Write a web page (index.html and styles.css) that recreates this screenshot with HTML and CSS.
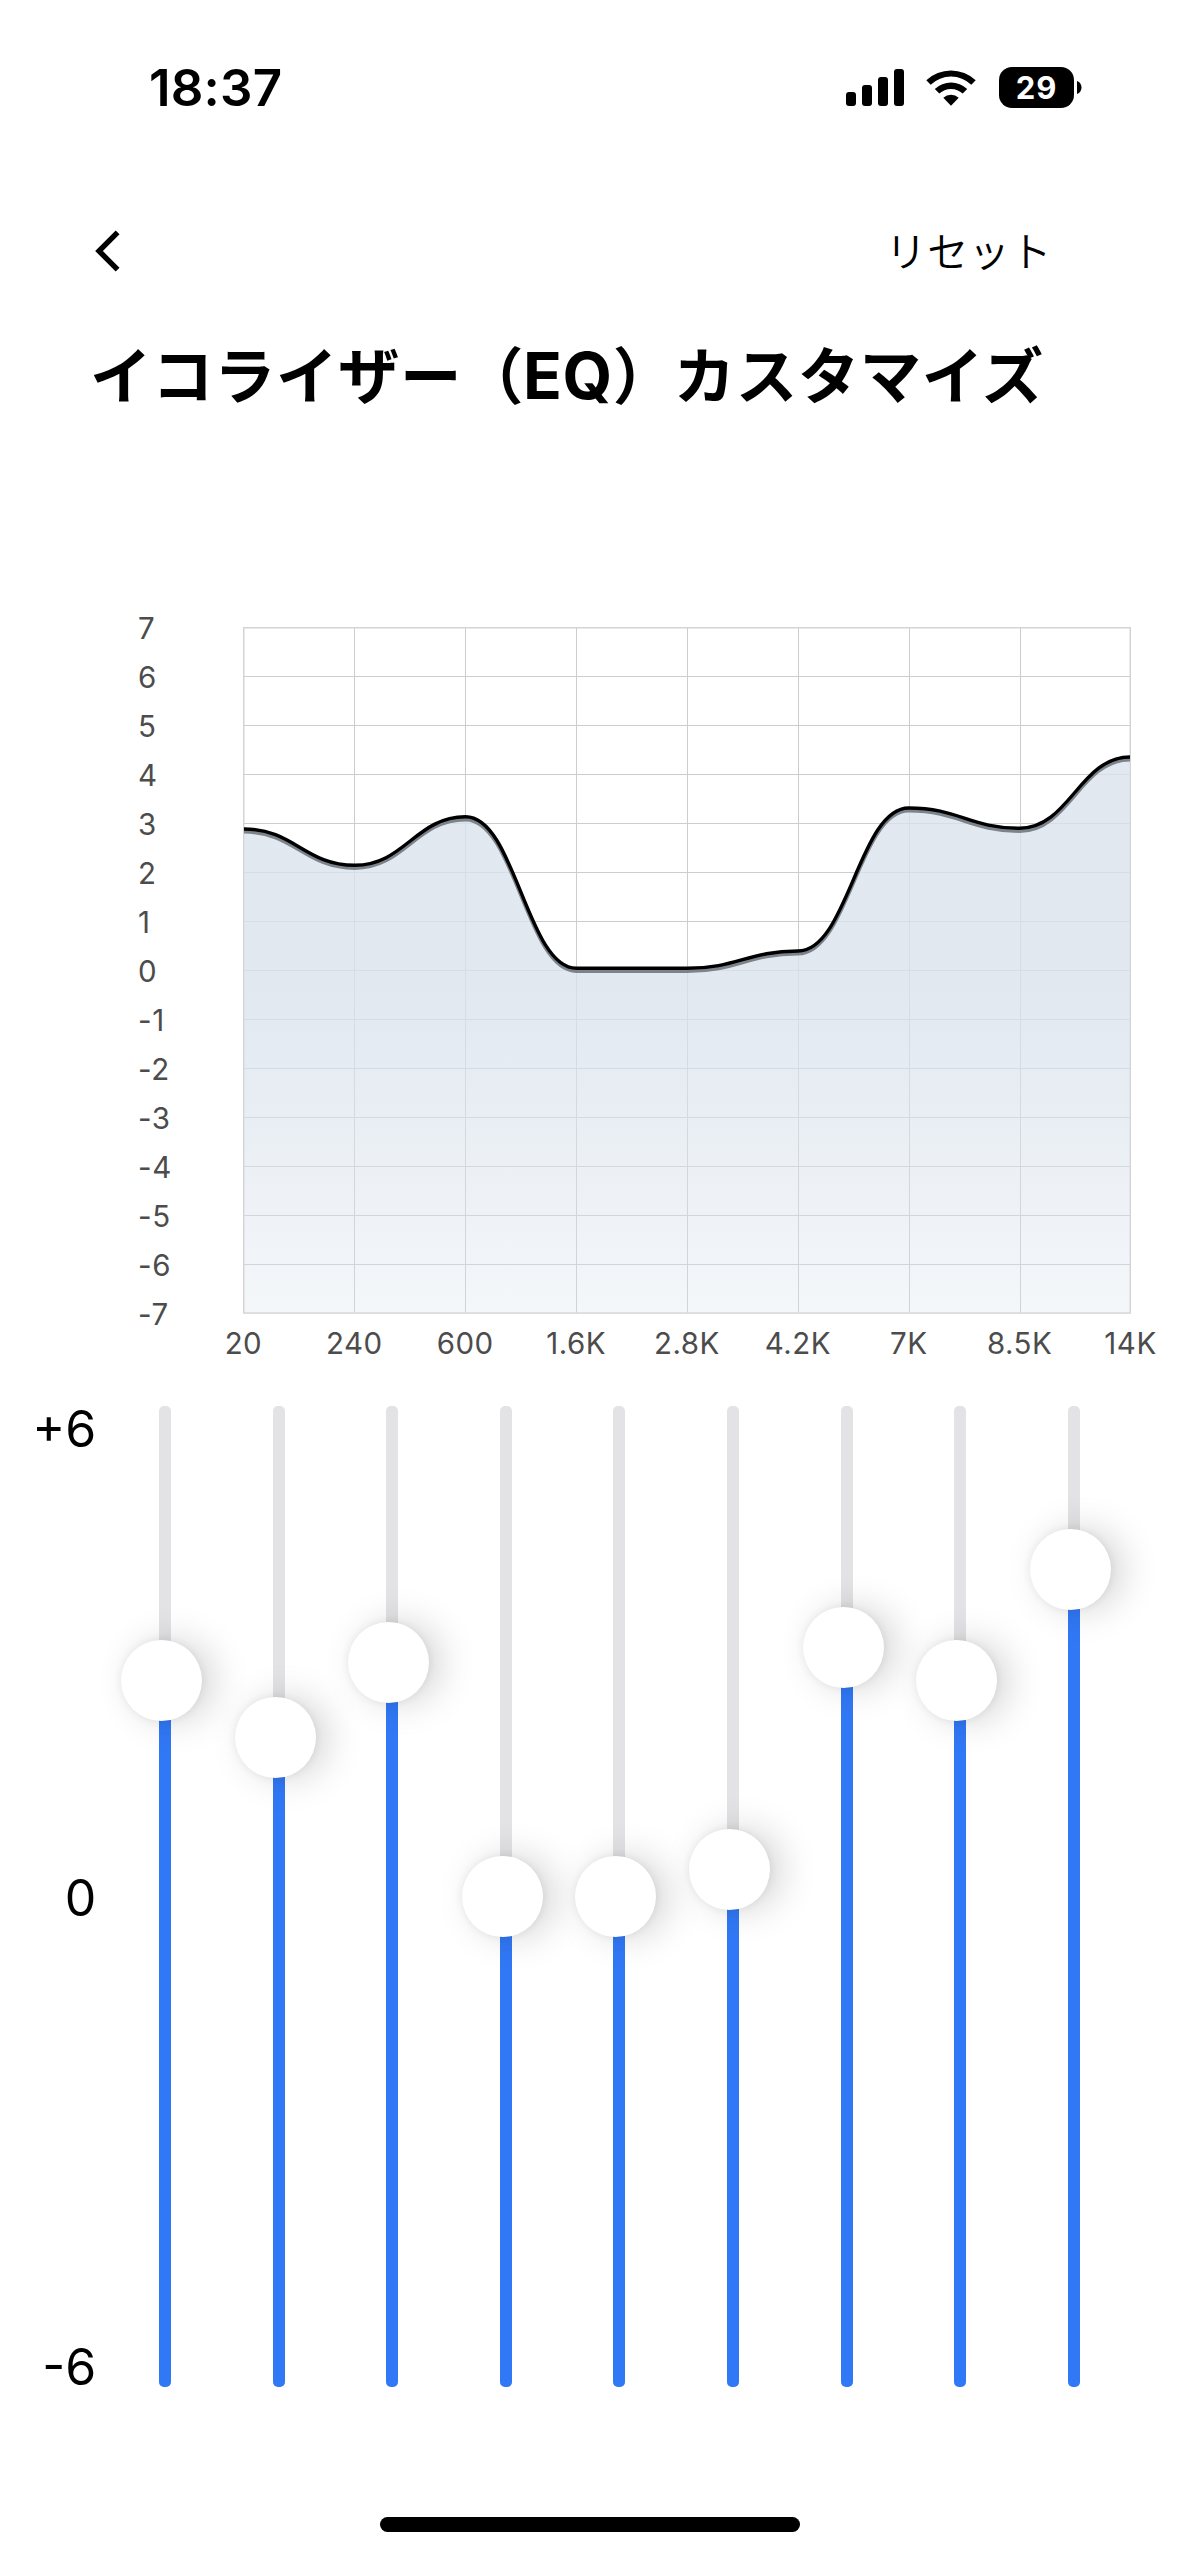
FILE: index.html
```html
<!DOCTYPE html>
<html lang="ja">
<head>
<meta charset="utf-8">
<title>イコライザー（EQ）カスタマイズ</title>
<link rel="stylesheet" href="styles.css">
</head>
<body>
<div class="screen">
  <header class="status">
    <span class="time">18:37</span>
    <div class="status-icons">
      <svg class="signal" width="58" height="37" viewBox="0 0 58 37">
        <rect x="0" y="23" width="10" height="14" rx="3"/>
        <rect x="16" y="16" width="10" height="21" rx="3"/>
        <rect x="32" y="8" width="10" height="29" rx="3"/>
        <rect x="48" y="0" width="10" height="37" rx="3"/>
      </svg>
      <svg class="wifi" width="50" height="37" viewBox="0 0 50 37">
        <path d="M0.3 11.2A36 36 0 0 1 49.7 11.2L45.3 15.7A29.5 29.5 0 0 0 4.7 15.7Z"/>
        <path d="M8.8 20A23.6 23.6 0 0 1 41.2 20L36.7 24.6A17 17 0 0 0 13.3 24.6Z"/>
        <path d="M17.3 28.8A11.3 11.3 0 0 1 32.7 28.8L25 36.8Z"/>
      </svg>
      <div class="battery"><span class="battery-body">29</span><svg width="5" height="13" viewBox="0 0 5 13"><path d="M0 0C3 1.2 4.5 3.5 4.5 6.5S3 11.8 0 13Z"/></svg></div>
    </div>
  </header>

  <nav class="nav">
    <svg class="back" width="26" height="42" viewBox="0 0 26 42"><path d="M22.6 2.3L4 21L22.6 39.7"/></svg>
    <span class="reset">リセット</span>
  </nav>

  <h1 class="title">イコライザー<span class="bracket">（</span><span class="latin">EQ</span><span class="bracket">）</span>カスタマイズ</h1>

  <section class="chart">
    <div class="y-axis">
      <span>7</span><span>6</span><span>5</span><span>4</span><span>3</span><span>2</span><span>1</span><span>0</span><span>-1</span><span>-2</span><span>-3</span><span>-4</span><span>-5</span><span>-6</span><span>-7</span>
    </div>
    <div class="plot">
      <svg width="888" height="687" viewBox="243 627 888 687">
        <defs>
          <linearGradient id="area" gradientUnits="userSpaceOnUse" x1="0" y1="757" x2="0" y2="1313">
            <stop offset="0" stop-color="#d9e2ec" stop-opacity=".78"/>
            <stop offset=".42" stop-color="#d9e2ec" stop-opacity=".78"/>
            <stop offset="1" stop-color="#d9e2ec" stop-opacity=".28"/>
          </linearGradient>
        </defs>
        <path class="grid" d="M244 676.5H1130M244 725.5H1130M244 774.5H1130M244 823.5H1130M244 872.5H1130M244 921.5H1130M244 970.5H1130M244 1019.5H1130M244 1068.5H1130M244 1117.5H1130M244 1166.5H1130M244 1215.5H1130M244 1264.5H1130M354.5 628V1313M465.5 628V1313M576.5 628V1313M687.5 628V1313M798.5 628V1313M909.5 628V1313M1020.5 628V1313"/>
        <rect class="frame" x="243.75" y="627.75" width="886.5" height="685.25"/>
        <path fill="url(#area)" d="M244 829C294 829 305 865.3 354.7 865.3S416 816.8 465.6 816.8S527 968.3 576.4 968.3H687.2C737 968.3 748 951 798 951S859 808 908.8 808S970 828.3 1019.6 828.3S1080 757 1130 757V1313H244Z"/>
        <path class="curve-shade" d="M244 831.6C294 831.6 305 867.9 354.7 867.9S416 819.4 465.6 819.4S527 970.9 576.4 970.9H687.2C737 970.9 748 953.6 798 953.6S859 810.6 908.8 810.6S970 830.9 1019.6 830.9S1080 759.6 1130 759.6"/>
        <path class="curve" d="M244 829C294 829 305 865.3 354.7 865.3S416 816.8 465.6 816.8S527 968.3 576.4 968.3H687.2C737 968.3 748 951 798 951S859 808 908.8 808S970 828.3 1019.6 828.3S1080 757 1130 757"/>
      </svg>
      <div class="x-axis">
        <span>20</span><span>240</span><span>600</span><span>1.6K</span><span>2.8K</span><span>4.2K</span><span>7K</span><span>8.5K</span><span>14K</span>
      </div>
    </div>
  </section>

  <section class="mixer">
    <div class="scale"><span>+6</span><span>0</span><span>-6</span></div>
    <div class="sliders">
      <div class="slider" style="--level:274px"><i class="fill"></i><i class="thumb"></i></div>
      <div class="slider" style="--level:331px"><i class="fill"></i><i class="thumb"></i></div>
      <div class="slider" style="--level:256px"><i class="fill"></i><i class="thumb"></i></div>
      <div class="slider" style="--level:490px"><i class="fill"></i><i class="thumb"></i></div>
      <div class="slider" style="--level:490px"><i class="fill"></i><i class="thumb"></i></div>
      <div class="slider" style="--level:463px"><i class="fill"></i><i class="thumb"></i></div>
      <div class="slider" style="--level:241px"><i class="fill"></i><i class="thumb"></i></div>
      <div class="slider" style="--level:274px"><i class="fill"></i><i class="thumb"></i></div>
      <div class="slider" style="--level:163px"><i class="fill"></i><i class="thumb"></i></div>
    </div>
  </section>

  <div class="home-indicator"></div>
</div>
</body>
</html>
```
FILE: styles.css
```css
* { box-sizing: border-box; }
body { margin: 0; background: #fff; }

.screen {
  width: 1179px;
  height: 2556px;
  overflow: hidden;
  display: flex;
  flex-direction: column;
  background: #fff;
  color: #000;
  font-family: Inter, "Noto Sans CJK JP", sans-serif;
}
svg { display: block; flex: none; }

.status {
  height: 176px;
  padding: 0 97px 0 149px;
  display: flex;
  justify-content: space-between;
}
.time {
  margin-top: 58px;
  font-size: 51px;
  line-height: 60px;
  font-weight: 600;
  letter-spacing: 0.2px;
}
.status-icons {
  height: 41px;
  margin-top: 67px;
  display: flex;
  align-items: center;
}
.wifi { margin: 0 23px 0 22px; }
.battery { display: flex; align-items: center; gap: 3px; }
.battery-body {
  width: 75px;
  height: 41px;
  border-radius: 13px;
  background: #000;
  color: #fff;
  font-size: 31px;
  line-height: 42px;
  font-weight: 700;
  letter-spacing: 0.8px;
  text-align: center;
}

.nav {
  height: 150px;
  padding: 0 127px 0 95px;
  display: flex;
  align-items: center;
  justify-content: space-between;
}
.back { fill: none; stroke: #000; stroke-width: 5.4; }
.reset {
  margin-top: -5px;
  font-family: "Noto Sans CJK JP", sans-serif;
  font-weight: 350;
  font-size: 41px;
  line-height: 60px;
  letter-spacing: 0.6px;
}

.title {
  margin: 0;
  height: 302px;
  padding: 5px 0 0 90px;
  font-family: "Noto Sans CJK JP", sans-serif;
  font-size: 61.5px;
  line-height: 84px;
  font-weight: 700;
  letter-spacing: 0.5px;
  white-space: nowrap;
}
.latin { font-family: Inter, sans-serif; font-size: 64px; line-height: 60px; }
.bracket { letter-spacing: -0.5px; }

.chart { height: 778px; display: flex; }
.y-axis {
  width: 243px;
  height: 735px;
  margin-top: -25px;
  padding-left: 138px;
  display: grid;
  grid-template-rows: repeat(15, 49px);
  align-items: center;
  font-size: 29.5px;
  letter-spacing: 0.6px;
  color: #4c4c4c;
}
.plot { width: 888px; margin-top: -1px; }
.grid { fill: none; stroke: #cdcdcd; stroke-width: 1; }
.frame { fill: none; stroke: #d4d4d4; stroke-width: 1.5; }
.curve { fill: none; stroke: #000; stroke-width: 3.4; }
.curve-shade { fill: none; stroke: #7d838a; stroke-width: 4; }
.x-axis {
  margin: 11px -55px 0 -55px;
  display: grid;
  grid-template-columns: repeat(9, 1fr);
  justify-items: center;
  font-size: 29.5px;
  line-height: 36px;
  letter-spacing: 0.5px;
  color: #4c4c4c;
}

.mixer { height: 981px; display: flex; }
.scale {
  width: 108.3px;
  height: 998px;
  margin-top: -7px;
  padding-right: 12px;
  display: flex;
  flex-direction: column;
  justify-content: space-between;
  align-items: flex-end;
  font-size: 50px;
  line-height: 60px;
}
.sliders {
  width: 1022.4px;
  display: grid;
  grid-template-columns: repeat(9, 1fr);
  justify-items: center;
}
.slider {
  position: relative;
  width: 12px;
  height: 981px;
  border-radius: 5px;
  background: #e3e3e5;
  display: flex;
  align-items: flex-end;
}
.fill {
  width: 12px;
  height: calc(981px - var(--level));
  border-radius: 0 0 5px 5px;
  background: #3178f6;
}
.thumb {
  position: absolute;
  left: -38px;
  top: calc(var(--level) - 40px);
  width: 81px;
  height: 81px;
  border-radius: 50%;
  background: #fff;
  box-shadow: 12px 0 36px rgba(0, 0, 0, .17), 0 0 8px rgba(0, 0, 0, .07);
}

.home-indicator {
  width: 420px;
  height: 15px;
  margin: 130px 0 0 380px;
  border-radius: 8px;
  background: #000;
}
```
